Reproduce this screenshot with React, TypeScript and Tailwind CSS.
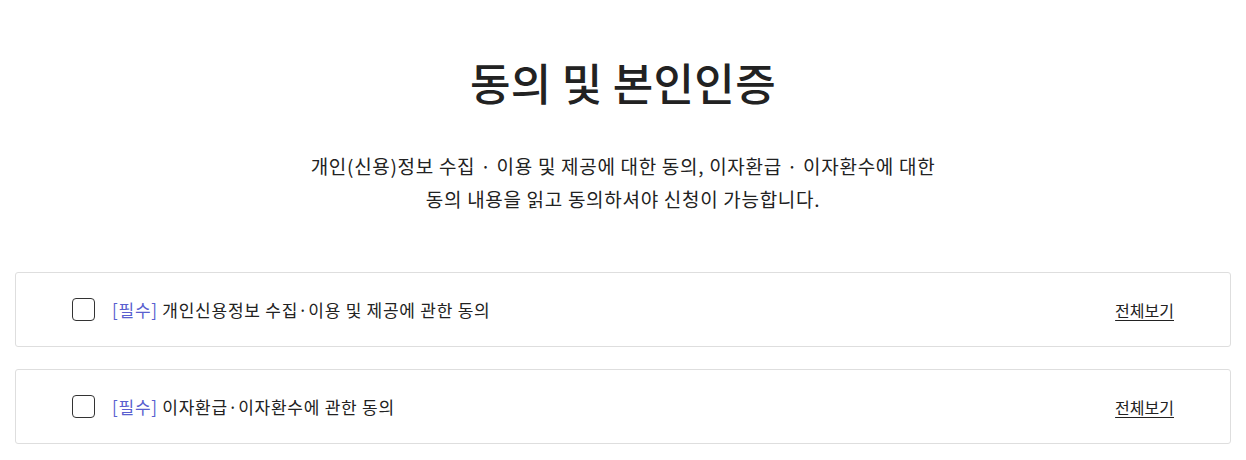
import React from "react";

const items = [
  "개인신용정보 수집·이용 및 제공에 관한 동의",
  "이자환급·이자환수에 관한 동의",
];

export default function App() {
  return (
    <div
      className="min-h-[460px] bg-white px-[15px] text-[#222]"
      style={{ fontFamily: '"Noto Sans CJK KR", "Noto Sans", sans-serif' }}
    >
      <h1 className="pt-[52px] text-center text-[44px] font-medium leading-[60px] tracking-[0.3px] text-[#222]">
        동의 및 본인인증
      </h1>
      <p className="mt-[37px] text-center text-[19px] leading-[33px] tracking-[0.7px] text-[#222]">
        개인(신용)정보 수집 · 이용 및 제공에 대한 동의, 이자환급 · 이자환수에 대한
        <br />
        동의 내용을 읽고 동의하셔야 신청이 가능합니다.
      </p>
      <div className="mt-[57px] flex flex-col gap-[22px]">
        {items.map((t) => (
          <div
            key={t}
            className="flex h-[75px] items-center rounded-[3px] border border-[#dedede] pl-[56px] pr-[56px]"
          >
            <span className="h-[23px] w-[23px] shrink-0 rounded-[4px] border-[1.5px] border-[#333]" />
            <span className="ml-[17px] text-[17px] tracking-[0.75px] text-[#222]">
              <span className="text-[#5a5fcf]">[필수]</span> {t}
            </span>
            <a className="ml-auto text-[16px] text-[#222] underline underline-offset-[3px]">
              전체보기
            </a>
          </div>
        ))}
      </div>
    </div>
  );
}
